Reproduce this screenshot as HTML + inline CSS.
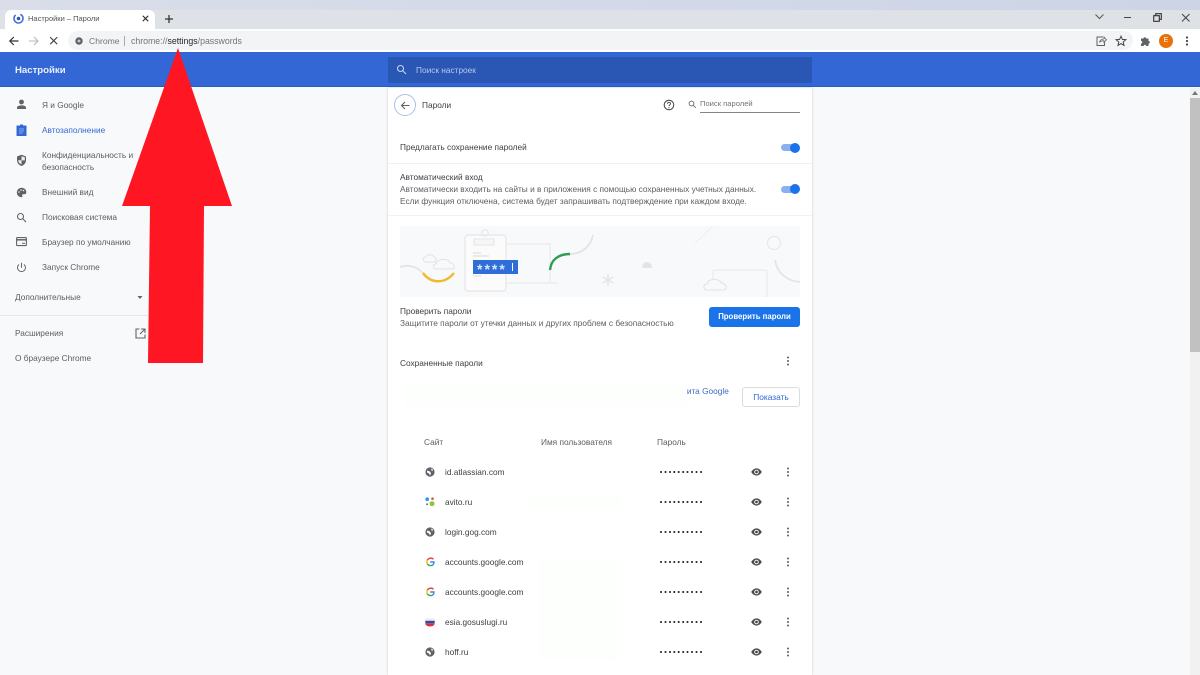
<!DOCTYPE html>
<html><head><meta charset="utf-8"><style>
html,body{margin:0;padding:0;width:1200px;height:675px;overflow:hidden;background:#f8f9fa;font-family:"Liberation Sans","Noto Sans CJK JP",sans-serif}
#w{position:absolute;left:0;top:0;width:1200px;height:675px;overflow:hidden;filter:blur(.3px)}
.t{position:absolute;white-space:nowrap;font-size:8.3px;line-height:12px;color:#5a5e63}
.d{color:#3c4043}
.b{position:absolute}
svg{position:absolute;overflow:visible}
</style></head><body><div id="w">
<svg width="0" height="0" style="left:0;top:0"><defs>
<g id="g"><circle cx="5" cy="5" r="4.600" fill="#5f6368"/><path d="M2 3.500l3 1 1 2-1 2-1-2-2-1zM6 1.500l2 1-1 2z" fill="#fff"/></g>
<g id="e"><path d="M.2 4C1.800 1.300 4 .4 5.500.4S9.200 1.300 10.800 4C9.200 6.700 7 7.600 5.500 7.600S1.800 6.700 .2 4z" fill="#4a4e52"/><circle cx="5.500" cy="4" r="2.300" fill="#fff"/><circle cx="5.500" cy="4" r="1.400" fill="#4a4e52"/></g>
<g id="m"><circle cx="2" cy="1.500" r="1.050" fill="#5f6368"/><circle cx="2" cy="5" r="1.050" fill="#5f6368"/><circle cx="2" cy="8.500" r="1.050" fill="#5f6368"/></g>
<g id="gg"><path d="M8.500 2.200A4 4 0 0 0 2.300 3.200" fill="none" stroke="#ea4335" stroke-width="1.400"/><path d="M2.300 3.200a4 4 0 0 0 0 3.600" fill="none" stroke="#fbbc05" stroke-width="1.400"/><path d="M2.300 6.800A4 4 0 0 0 8 7.800" fill="none" stroke="#34a853" stroke-width="1.400"/><path d="M8 7.800A4 4 0 0 0 9 5H5.200" fill="none" stroke="#4285f4" stroke-width="1.400"/></g>
<g id="p" fill="#202124"><circle cx="2" cy="2" r="1.050"/><circle cx="6.500" cy="2" r="1.050"/><circle cx="11" cy="2" r="1.050"/><circle cx="15.300" cy="2" r="1.050"/><circle cx="19.700" cy="2" r="1.050"/><circle cx="24.200" cy="2" r="1.050"/><circle cx="28.500" cy="2" r="1.050"/><circle cx="33" cy="2" r="1.050"/><circle cx="37.500" cy="2" r="1.050"/><circle cx="42" cy="2" r="1.050"/></g>
</defs></svg>
<div class="b" style="left:0;top:0;width:1200px;height:10px;background:linear-gradient(90deg,#d9dee9,#d3d9e8 50%,#ccd4e6)"></div>
<div class="b" style="left:0;top:10px;width:1200px;height:19px;background:#dee1e6"></div>
<div class="b" style="left:5px;top:10px;width:150px;height:19px;background:#fff;border-radius:6px 6px 0 0"></div>
<svg style="left:12px;top:12px" width="13" height="13" viewBox="0 0 13 13"><circle cx="6.500" cy="6.500" r="4.500" fill="none" stroke="#3f6fd8" stroke-width="1.600" stroke-dasharray="18 5"/><circle cx="6.500" cy="6.500" r="1.800" fill="#2a56b4"/></svg>
<div class="t" style="left:28px;top:13px;font-size:7.500px;color:#50545a">Настройки – Пароли</div>
<svg style="left:141px;top:14px" width="9" height="9"><path d="M1.800 1.800l5.400 5.400M7.200 1.800l-5.400 5.400" stroke="#333" stroke-width="1.100"/></svg>
<svg style="left:164px;top:14px" width="10" height="10"><path d="M5 1v8M1 5h8" stroke="#333" stroke-width="1.300"/></svg>
<svg style="left:1094px;top:13px" width="11" height="8"><path d="M1.500 1.500l4 4 4-4" fill="none" stroke="#555" stroke-width="1"/></svg>
<div class="b" style="left:1124px;top:16.500px;width:7px;height:1.200px;background:#444"></div>
<svg style="left:1153px;top:13px" width="9" height="9"><path d="M.7 2.700h5.600v5.600H.7zM2.700 2.700V.7h5.600v5.600H6.300" fill="none" stroke="#333" stroke-width="1.100"/></svg>
<svg style="left:1181px;top:13px" width="10" height="10"><path d="M1 1l7.500 7.500M8.500 1L1 8.500" stroke="#444" stroke-width="1"/></svg>

<div class="b" style="left:0;top:29px;width:1200px;height:23px;background:#fff"></div>
<div class="b" style="left:68px;top:31px;width:1065px;height:19px;background:#f3f4f6;border-radius:10px"></div>
<svg style="left:8px;top:34.500px" width="12" height="12"><path d="M10.500 6H2M5.800 2 1.800 6 5.800 10" fill="none" stroke="#333" stroke-width="1.200"/></svg>
<svg style="left:28px;top:34.500px" width="12" height="12"><path d="M1 6h9M6 2 10 6 6 10" fill="none" stroke="#b4b7bb" stroke-width="1.100"/></svg>
<svg style="left:49px;top:36px" width="10" height="10"><path d="M1.200 1.200l7 7M8.200 1.200l-7 7" stroke="#444" stroke-width="1.100"/></svg>
<svg style="left:75px;top:37px" width="8" height="8"><circle cx="4" cy="4" r="3.700" fill="#5f6368"/><circle cx="4" cy="4" r="1.400" fill="#ccc"/></svg>
<div class="t" style="left:89px;top:35px;color:#70757a;font-size:8.600px">Chrome</div>
<div class="b" style="left:124px;top:36px;width:1px;height:10px;background:#aaa"></div>
<div class="t" style="left:131px;top:35px;color:#70757a;font-size:8.750px">chrome://<span style="color:#26282b">settings</span>/passwords</div>
<svg style="left:1095px;top:35px" width="12" height="12" viewBox="0 0 12 12"><path d="M8 2H2v8.500h7.500V7.500" fill="none" stroke="#5f6368"/><path d="M4.500 7.500C5 5 7 4 9 4V2l2.500 2.800L9 7.500V5.700C7 5.700 5.500 6 4.500 7.500z" fill="#fff" stroke="#5f6368" stroke-width=".8"/></svg>
<svg style="left:1115px;top:35px" width="12" height="12" viewBox="0 0 12 12"><path d="M6 1.200l1.400 3.200 3.500.3-2.700 2.300.8 3.400L6 8.600l-3 1.800.8-3.400L1.100 4.700l3.500-.3z" fill="none" stroke="#444" stroke-width="1"/></svg>
<svg style="left:1140px;top:35px" width="12" height="12" viewBox="0 0 12 12"><path d="M1 3.500h2.500a1.300 1.300 0 1 1 2.600 0h2.400V6a1.300 1.300 0 1 1 0 2.600V11H6.200a1.300 1.300 0 1 0-2.600 0H1V8.500a1.300 1.300 0 1 0 0-2.600z" fill="#5f6368"/></svg>
<div class="b" style="left:1159px;top:34px;width:14px;height:14px;border-radius:50%;background:#e8710a;color:#fff;font-size:7px;line-height:14px;text-align:center">E</div>
<svg style="left:1185px;top:36px" width="4" height="10"><circle cx="2" cy="1.500" r="1.100" fill="#444"/><circle cx="2" cy="5" r="1.100" fill="#444"/><circle cx="2" cy="8.500" r="1.100" fill="#444"/></svg>

<div class="b" style="left:0;top:52px;width:1200px;height:35px;background:#3367d6;border-bottom:1px solid #2a5cc8;box-sizing:border-box"></div>
<div class="t" style="left:15px;top:65px;color:#fff;font-size:9.600px;font-weight:bold;opacity:.9">Настройки</div>
<div class="b" style="left:388px;top:57px;width:424px;height:26px;background:#2a56b4"></div>
<svg style="left:396px;top:64px" width="11" height="11"><circle cx="4.500" cy="4.500" r="3" fill="none" stroke="#c5d3f0" stroke-width="1.100"/><path d="M7 7l3 3" stroke="#c5d3f0" stroke-width="1.100"/></svg>
<div class="t" style="left:416px;top:64px;color:#b9c9ee">Поиск настроек</div>

<!-- sidebar -->
<svg style="left:16px;top:99px" width="11" height="11"><circle cx="5.500" cy="3" r="2.400" fill="#5f6368"/><path d="M1 10V8.500C1 7 3.500 6.400 5.500 6.400S10 7 10 8.500V10z" fill="#5f6368"/></svg>
<div class="t" style="left:42px;top:99px">Я и Google</div>
<svg style="left:16px;top:124px" width="11" height="12"><path d="M1 2h9v9.500H1z" fill="#3367d6" stroke="#3367d6" stroke-linejoin="round"/><path d="M3 5h5M3 7h5M3 9h3.500" stroke="#a9c0ee" stroke-width=".8"/><rect x="4" y=".5" width="3" height="2" fill="#3367d6"/></svg>
<div class="t" style="left:42px;top:124px;color:#3367d6">Автозаполнение</div>
<svg style="left:16px;top:154px" width="11" height="13"><path d="M5.500.8L1 2.500v3.500c0 3 2 5.200 4.500 6 2.500-.8 4.500-3 4.500-6V2.500z" fill="#5f6368"/><path d="M5.500 2.300v4H2.200c.1 2 1.500 3.400 3.300 4.100v-4h3.300V3.300z" fill="#eee"/></svg>
<div class="t" style="left:42px;top:149px">Конфиденциальность и</div>
<div class="t" style="left:42px;top:161px">безопасность</div>
<svg style="left:16px;top:187px" width="11" height="11"><path d="M5.500 .8A4.700 4.700 0 0 0 5.500 10.200c1 0 1.200-.8.800-1.400-.5-.8 0-1.600 1-1.600h1.300c1 0 1.700-.8 1.700-2C10.300 2.700 8.200.8 5.500.8z" fill="#5f6368"/><circle cx="3" cy="5" r=".8" fill="#eee"/><circle cx="5" cy="3" r=".8" fill="#eee"/><circle cx="7.500" cy="3.500" r=".8" fill="#eee"/></svg>
<div class="t" style="left:42px;top:186px">Внешний вид</div>
<svg style="left:16px;top:212px" width="11" height="11"><circle cx="4.500" cy="4.500" r="3" fill="none" stroke="#5f6368" stroke-width="1.100"/><path d="M7 7l3 3" stroke="#5f6368" stroke-width="1.100"/></svg>
<div class="t" style="left:42px;top:211px">Поисковая система</div>
<svg style="left:16px;top:237px" width="11" height="10"><rect x=".6" y=".6" width="9.800" height="8" rx=".8" fill="none" stroke="#5f6368" stroke-width="1.100"/><path d="M.6 2.800h9.800" stroke="#5f6368" stroke-width="1.500"/><path d="M6 6.300h3" stroke="#5f6368"/></svg>
<div class="t" style="left:42px;top:236px">Браузер по умолчанию</div>
<svg style="left:16px;top:262px" width="11" height="11"><path d="M3 2.500a4 4 0 1 0 5 0" fill="none" stroke="#5f6368" stroke-width="1"/><path d="M5.500 .8v5" stroke="#5f6368" stroke-width="1"/></svg>
<div class="t" style="left:42px;top:261px">Запуск Chrome</div>
<div class="t" style="left:15px;top:291px">Дополнительные</div>
<svg style="left:137px;top:296px" width="7" height="4"><path d="M.5 0h5L3 3z" fill="#5f6368"/></svg>
<div class="b" style="left:0;top:315px;width:148px;height:1px;background:#e6e8ea"></div>
<div class="t" style="left:15px;top:327px">Расширения</div>
<svg style="left:135px;top:328px" width="11" height="11"><path d="M4.500 1H1v9h9V6.500M6 1h4v4M10 1L5 6" fill="none" stroke="#5f6368" stroke-width="1.100"/></svg>
<div class="t" style="left:15px;top:352px">О браузере Chrome</div>

<!-- card -->
<div class="b" style="left:388px;top:88px;width:424px;height:587px;background:#fff;box-shadow:0 0 2px rgba(60,64,67,.28)"></div>
<div class="b" style="left:400px;top:378px;width:290px;height:32px;background:#fdfffd;filter:blur(3px)"></div>
<div class="b" style="left:525px;top:492px;width:100px;height:20px;background:#fdfffd;filter:blur(3px)"></div>
<div class="b" style="left:535px;top:556px;width:85px;height:108px;background:#fdfffd;filter:blur(3px)"></div>
<div class="b" style="left:394px;top:94px;width:22px;height:22px;box-sizing:border-box;border:1px solid #a9c0e6;border-radius:50%"></div>
<svg style="left:400px;top:100.500px" width="10" height="9"><path d="M9.500 4.500H1.500M5 1L1.500 4.500 5 8" fill="none" stroke="#5f6368" stroke-width="1.100"/></svg>
<div class="t d" style="left:422px;top:99px">Пароли</div>
<svg style="left:663px;top:99px" width="12" height="12"><circle cx="6" cy="6" r="4.800" fill="none" stroke="#444" stroke-width="1"/><path d="M4.500 4.800c0-2 3-2 3 0 0 1.200-1.500 1.200-1.500 2.300" fill="none" stroke="#444" stroke-width=".9"/><circle cx="6" cy="8.700" r=".6" fill="#444"/></svg>
<svg style="left:688px;top:100px" width="9" height="9"><circle cx="3.500" cy="3.500" r="2.400" fill="none" stroke="#70757a" stroke-width="1"/><path d="M5.300 5.300l2.500 2.500" stroke="#70757a" stroke-width="1"/></svg>
<div class="t" style="left:700px;top:98px;font-size:7.600px;color:#70757a">Поиск паролей</div>
<div class="b" style="left:700px;top:112px;width:100px;height:1px;background:#80868b"></div>

<div class="t d" style="left:400px;top:141px">Предлагать сохранение паролей</div>
<div class="b" style="left:781px;top:144px;width:17px;height:7px;border-radius:4px;background:#8ab0ee"></div>
<div class="b" style="left:790px;top:143px;width:10px;height:10px;border-radius:50%;background:#1a73e8"></div>
<div class="b" style="left:388px;top:163px;width:424px;height:1px;background:#f0f1f2"></div>
<div class="t d" style="left:400px;top:171px">Автоматический вход</div>
<div class="t" style="left:400px;top:183px">Автоматически входить на сайты и в приложения с помощью сохраненных учетных данных.</div>
<div class="t" style="left:400px;top:195px">Если функция отключена, система будет запрашивать подтверждение при каждом входе.</div>
<div class="b" style="left:781px;top:186px;width:17px;height:7px;border-radius:4px;background:#8ab0ee"></div>
<div class="b" style="left:790px;top:184px;width:10px;height:10px;border-radius:50%;background:#1a73e8"></div>
<div class="b" style="left:388px;top:215px;width:424px;height:1px;background:#f0f1f2"></div>

<!-- illustration -->
<div class="b" style="left:400px;top:226px;width:400px;height:71px;background:#f8f9fa"></div>
<svg style="left:400px;top:226px;overflow:hidden" width="400" height="71" viewBox="0 0 400 71">
<path d="M0 41c10-3 17 0 23 6" fill="none" stroke="#e2e4e6" stroke-width="1.800"/>
<path d="M23 47c8 11 22 11 31 0" fill="none" stroke="#f0b92e" stroke-width="2.400"/>
<path d="M26 36c-3 0-4-5 0-5 1-3 7-3 8 0 3 0 3 5 0 5zM36 43c-3 0-4-5 0-5 1-6 13-6 14-1 5 0 6 6 2 6z" fill="none" stroke="#e0e2e4"/>
<path d="M105 18h45v38" fill="none" stroke="#e4e6e8"/>
<path d="M85 57h73" stroke="#e4e6e8"/>
<rect x="65" y="9" width="41" height="56" rx="3" fill="#fbfbfc" stroke="#e4e6e8" stroke-width="1.200"/>
<path d="M74 13h20v6H74z" fill="#f6f6f7" stroke="#e4e6e8"/><circle cx="85" cy="7" r="3.200" fill="none" stroke="#e4e6e8" stroke-width="1.200"/>
<path d="M73 27h8M73 30h16M73 50h8" stroke="#d8dadc"/>
<rect x="73" y="34" width="45" height="14" fill="#2f6ed8"/>
<text x="77" y="48" font-size="14" font-weight="bold" fill="#dbe6fa" font-family="Liberation Sans,sans-serif" letter-spacing="2">****</text>
<path d="M112.500 37v8" stroke="#fff"/>
<path d="M150 44c1-10 8-16 20-16" fill="none" stroke="#2d9e4f" stroke-width="2.400"/>
<path d="M170 28c12 0 21-8 23-19" fill="none" stroke="#e2e4e6" stroke-width="1.800"/>
<path d="M242 42c0-8 10-8 10 0z" fill="#e2e4e6"/>
<path d="M208 48v12M202.500 51l11 6M213.500 51l-11 6" stroke="#e2e4e6" stroke-width="1.500"/>
<path d="M295 17l18-17" stroke="#eeeff0"/>
<circle cx="374" cy="17" r="6.500" fill="none" stroke="#e4e6e8"/>
<path d="M375 34c2 13 12 21 25 22" fill="none" stroke="#e2e4e6" stroke-width="1.800"/>
<path d="M313 60V46q0-2 2-2h50q2 0 2 2v25" fill="none" stroke="#e4e6e8"/>
<path d="M306 64c-3-1-3-6 1-6 1-6 13-6 14-1 6 0 7 7 2 7z" fill="#f8f9fa" stroke="#e0e2e4"/>
</svg>
<div class="t d" style="left:400px;top:305px">Проверить пароли</div>
<div class="t" style="left:400px;top:317px">Защитите пароли от утечки данных и других проблем с безопасностью</div>
<div class="b" style="left:709px;top:307px;width:91px;height:20px;background:#1a73e8;border-radius:3px;color:#fff;font-size:7.800px;line-height:20px;text-align:center;font-weight:bold">Проверить пароли</div>

<div class="t d" style="left:400px;top:357px">Сохраненные пароли</div>
<svg style="left:786px;top:356px" width="4" height="10"><use href="#m"/></svg>
<div class="t" style="left:682px;top:385px;color:#3d6bc4;clip-path:inset(0 0 0 5px)">лита Google</div>
<div class="b" style="left:742px;top:387px;width:58px;height:20px;box-sizing:border-box;border:1px solid #dadce0;border-radius:3px;color:#3367d6;font-size:8.400px;line-height:18px;text-align:center">Показать</div>

<div class="t" style="left:424px;top:436px">Сайт</div>
<div class="t" style="left:541px;top:436px">Имя пользователя</div>
<div class="t" style="left:657px;top:436px">Пароль</div>

<!-- rows -->
<svg style="left:425px;top:467px" width="10" height="10"><use href="#g"/></svg>
<svg style="left:425px;top:497px" width="10" height="10"><circle cx="2.200" cy="2.200" r="1.800" fill="#1e9be8"/><circle cx="7.500" cy="1.700" r="1.300" fill="#d9534f"/><circle cx="2" cy="7.200" r="1" fill="#7a5fb8"/><circle cx="7" cy="6.700" r="2.500" fill="#8cc63f"/></svg>
<svg style="left:425px;top:527px" width="10" height="10"><use href="#g"/></svg>
<svg style="left:425px;top:557px" width="10" height="10"><use href="#gg"/></svg>
<svg style="left:425px;top:587px" width="10" height="10"><use href="#gg"/></svg>
<svg style="left:425px;top:617px" width="10" height="10"><path d="M.3 1.500h9.400v2.300H.3z" fill="#e8eaf0"/><path d="M.3 3.800h9.400v2.500H.3z" fill="#2b4da8"/><path d="M.3 6.300h9.400c0 2-2 3.200-4.700 3.200S.3 8.300.3 6.300z" fill="#d8343f"/></svg>
<svg style="left:425px;top:647px" width="10" height="10"><use href="#g"/></svg>

<div class="t d" style="left:445px;top:466px">id.atlassian.com</div>
<div class="t d" style="left:445px;top:496px">avito.ru</div>
<div class="t d" style="left:445px;top:526px">login.gog.com</div>
<div class="t d" style="left:445px;top:556px">accounts.google.com</div>
<div class="t d" style="left:445px;top:586px">accounts.google.com</div>
<div class="t d" style="left:445px;top:616px">esia.gosuslugi.ru</div>
<div class="t d" style="left:445px;top:646px">hoff.ru</div>

<svg style="left:659px;top:470px" width="46" height="4"><use href="#p"/></svg>
<svg style="left:659px;top:500px" width="46" height="4"><use href="#p"/></svg>
<svg style="left:659px;top:530px" width="46" height="4"><use href="#p"/></svg>
<svg style="left:659px;top:560px" width="46" height="4"><use href="#p"/></svg>
<svg style="left:659px;top:590px" width="46" height="4"><use href="#p"/></svg>
<svg style="left:659px;top:620px" width="46" height="4"><use href="#p"/></svg>
<svg style="left:659px;top:650px" width="46" height="4"><use href="#p"/></svg>

<svg style="left:751px;top:468px" width="11" height="8"><use href="#e"/></svg>
<svg style="left:751px;top:498px" width="11" height="8"><use href="#e"/></svg>
<svg style="left:751px;top:528px" width="11" height="8"><use href="#e"/></svg>
<svg style="left:751px;top:558px" width="11" height="8"><use href="#e"/></svg>
<svg style="left:751px;top:588px" width="11" height="8"><use href="#e"/></svg>
<svg style="left:751px;top:618px" width="11" height="8"><use href="#e"/></svg>
<svg style="left:751px;top:648px" width="11" height="8"><use href="#e"/></svg>

<svg style="left:786px;top:467px" width="4" height="10"><use href="#m"/></svg>
<svg style="left:786px;top:497px" width="4" height="10"><use href="#m"/></svg>
<svg style="left:786px;top:527px" width="4" height="10"><use href="#m"/></svg>
<svg style="left:786px;top:557px" width="4" height="10"><use href="#m"/></svg>
<svg style="left:786px;top:587px" width="4" height="10"><use href="#m"/></svg>
<svg style="left:786px;top:617px" width="4" height="10"><use href="#m"/></svg>
<svg style="left:786px;top:647px" width="4" height="10"><use href="#m"/></svg>

<!-- scrollbar -->
<div class="b" style="left:1190px;top:88px;width:10px;height:587px;background:#f1f1f1"></div>
<svg style="left:1192px;top:91px" width="6" height="4"><path d="M3 0l3 4H0z" fill="#777"/></svg>
<div class="b" style="left:1190px;top:98px;width:10px;height:254px;background:#c1c1c1"></div>

<!-- red arrow -->
<svg style="left:0;top:0" width="1200" height="675"><path d="M178 48L232 206H204L203 363H148L150 206H122z" fill="#fe1622"/></svg>
</div></body></html>
